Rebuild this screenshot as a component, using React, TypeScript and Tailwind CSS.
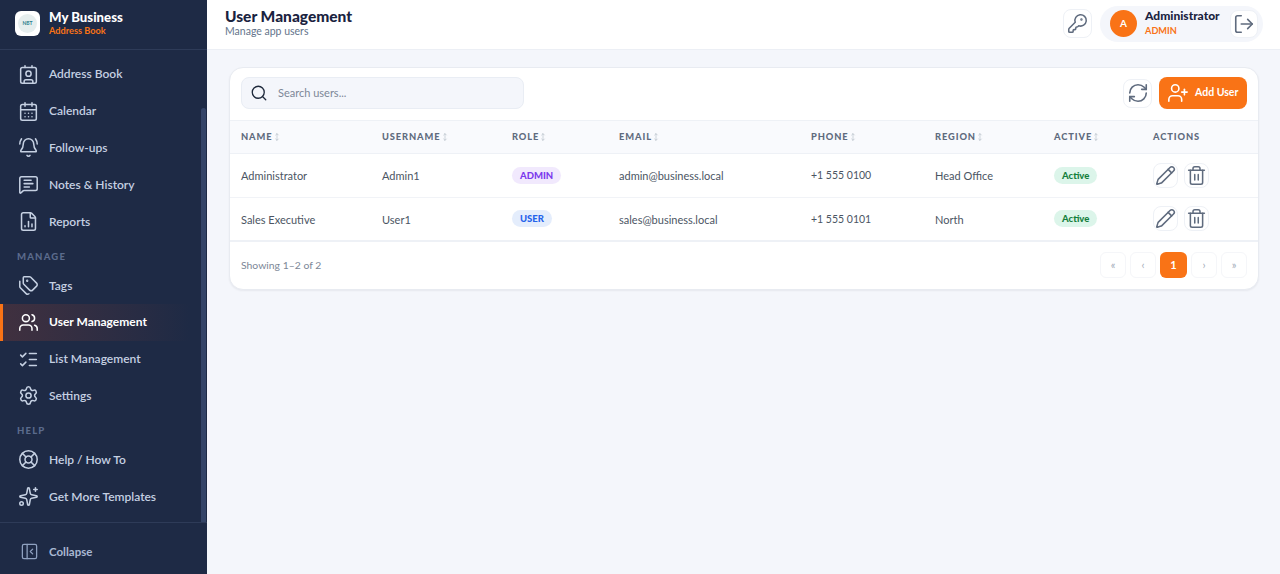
import React from 'react';
import {
  BellRing,
  CalendarDays,
  Contact,
  FileChartColumn,
  KeyRound,
  LifeBuoy,
  ListChecks,
  LogOut,
  MessageSquareText,
  MoveVertical,
  PanelLeftClose,
  Pencil,
  RefreshCw,
  Search,
  Settings,
  Sparkles,
  Tags,
  Trash2,
  UserPlus,
  Users,
} from 'lucide-react';

const mainNav = [
  { label: 'Address Book', icon: Contact },
  { label: 'Calendar', icon: CalendarDays },
  { label: 'Follow-ups', icon: BellRing },
  { label: 'Notes & History', icon: MessageSquareText },
  { label: 'Reports', icon: FileChartColumn },
];

const manageNav = [
  { label: 'Tags', icon: Tags },
  { label: 'User Management', icon: Users, active: true },
  { label: 'List Management', icon: ListChecks },
  { label: 'Settings', icon: Settings },
];

const helpNav = [
  { label: 'Help / How To', icon: LifeBuoy },
  { label: 'Get More Templates', icon: Sparkles },
];

const columns = ['Name', 'Username', 'Role', 'Email', 'Phone', 'Region', 'Active'];

const users = [
  {
    name: 'Administrator',
    username: 'Admin1',
    role: 'ADMIN',
    roleClass: 'bg-[#f1e9fd] text-[#7c3aed]',
    email: 'admin@business.local',
    phone: '+1 555 0100',
    region: 'Head Office',
  },
  {
    name: 'Sales Executive',
    username: 'User1',
    role: 'USER',
    roleClass: 'bg-[#e4edfc] text-[#2563eb]',
    email: 'sales@business.local',
    phone: '+1 555 0101',
    region: 'North',
  },
];

const NavItem = ({ label, icon: Icon, active }: { label: string; icon: React.ElementType; active?: boolean }) => (
  <div
    className={
      active
        ? 'flex h-[36.8px] w-[190px] items-center gap-[11px] border-l-[3px] border-[#f97316] bg-gradient-to-r from-[#40303f] to-[#1e2a45] pl-[16px] text-[12px] font-bold text-white'
        : 'flex h-[36.8px] items-center gap-[11px] pl-[19px] text-[12px] font-semibold text-[#c5d0e2]'
    }
  >
    <Icon size={18} strokeWidth={1.75} className="h-[19px] w-[19px] shrink-0 scale-[1.1]" />
    <span>{label}</span>
  </div>
);

const SectionLabel = ({ children }: { children: string }) => (
  <div className="flex h-[27.2px] items-end pb-[3px] pl-[17px] text-[9.5px] font-black tracking-[1.2px] text-[#5b6b8c]">
    {children}
  </div>
);

const IconBox = ({ children, className }: { children: React.ReactNode; className: string }) => (
  <div className={`flex items-center justify-center rounded-lg border border-[#eef1f6] bg-white text-[#5f6b7e] ${className}`}>
    {children}
  </div>
);

const PageButton = ({ label }: { label: string }) => (
  <div className="flex h-[26px] w-[26px] items-center justify-center rounded-md border border-[#f5f6f9] bg-white text-[11px] text-[#a3acb9]">
    {label}
  </div>
);

export default function App() {
  return (
    <div className="flex h-[574px] w-[1280px] overflow-hidden bg-[#f4f6fb] font-['Lato',sans-serif]">
      <aside className="relative flex w-[207px] shrink-0 flex-col bg-[#1e2a45]">
        <div className="flex h-[50px] shrink-0 items-center gap-[9px] border-b border-[#2e3b58] pb-[4px] pl-[15px]">
          <div className="mt-[2px] flex h-[25px] w-[25px] items-center justify-center rounded-md bg-white">
            <div className="flex h-[19px] w-[19px] items-center justify-center rounded-full bg-[#e6eeee] text-[5px] font-bold text-[#2a7f8f]">
              NBT
            </div>
          </div>
          <div>
            <div className="text-[13.2px] font-black leading-[15px] text-white">My Business</div>
            <div className="text-[9.2px] font-bold leading-[11px] text-[#f97316]">Address Book</div>
          </div>
        </div>

        <nav className="flex-1 pt-[6px]">
          {mainNav.map((item) => (
            <NavItem key={item.label} {...item} />
          ))}
          <SectionLabel>MANAGE</SectionLabel>
          {manageNav.map((item) => (
            <NavItem key={item.label} {...item} />
          ))}
          <SectionLabel>HELP</SectionLabel>
          {helpNav.map((item) => (
            <NavItem key={item.label} {...item} />
          ))}
        </nav>

        <div className="flex h-[52px] shrink-0 items-center gap-[10px] border-t border-[#2e3b58] pl-5 pt-[6px] text-[11.5px] font-bold text-[#a9b8d2]">
          <PanelLeftClose size={19} strokeWidth={1.6} className="shrink-0 text-[#8fa1c0]" />
          <span>Collapse</span>
        </div>

        {/* sidebar scrollbar thumb */}
        <div className="absolute right-[1px] top-[108px] h-[414px] w-[5px] rounded-t bg-[#344467]" />
      </aside>

      <div className="flex min-w-0 flex-1 flex-col">
        <header className="flex h-[50px] shrink-0 items-center justify-between border-b border-[#eceff5] bg-white pl-[18px] pr-[17px]">
          <div className="pb-[3px]">
            <div className="text-[15.5px] font-black leading-[17px] text-[#1a2340]">User Management</div>
            <div className="text-[10.5px] leading-[13px] text-[#64748b]">Manage app users</div>
          </div>
          <div className="flex items-center gap-[8px] pb-[2px]">
            <IconBox className="h-[29px] w-[29px]">
              <KeyRound size={21} strokeWidth={1.75} />
            </IconBox>
            <div className="flex h-[36px] w-[163px] items-center rounded-[18px] bg-[#f4f6fb] pl-[10px]">
              <div className="flex h-[27px] w-[27px] items-center justify-center rounded-full bg-[#f97316] text-[10px] font-bold text-white">
                A
              </div>
              <div className="ml-[8px] w-[85px]">
                <div className="text-[12px] font-black leading-[15px] text-[#1a2340]">Administrator</div>
                <div className="text-[9.2px] font-bold leading-[16px] text-[#f97316]">ADMIN</div>
              </div>
              <IconBox className="h-[28px] w-[28px]">
                <LogOut size={22} strokeWidth={1.75} />
              </IconBox>
            </div>
          </div>
        </header>

        <main className="pl-[22px] pt-[17px]">
          <div className="h-[223px] w-[1030px] rounded-[14px] border border-[#e8ebf1] bg-white shadow-[0_1px_2px_rgba(15,23,42,0.06)]">
            <div className="flex h-[53px] items-center justify-between border-b border-[#eef1f6] pb-[2px] pl-[11px] pr-[11px]">
              <div className="flex h-[32px] w-[283px] items-center gap-[10px] rounded-lg border border-[#e9edf4] bg-[#f4f6fb] pl-[8px] text-[11px] text-[#7c8797]">
                <Search size={18} strokeWidth={1.75} className="text-[#1e293b]" />
                <span>Search users...</span>
              </div>
              <div className="flex items-center gap-[7px]">
                <IconBox className="h-[29px] w-[29px]">
                  <RefreshCw size={22} strokeWidth={1.75} />
                </IconBox>
                <div className="flex h-[32px] w-[88px] items-center gap-[6px] rounded-lg bg-[#f97316] pl-[8px] text-[10.5px] font-bold text-white">
                  <UserPlus size={22} strokeWidth={1.75} />
                  <span>Add User</span>
                </div>
              </div>
            </div>

            <table className="w-full table-fixed border-collapse text-left">
              <colgroup>
                <col className="w-[141px]" />
                <col className="w-[130px]" />
                <col className="w-[107px]" />
                <col className="w-[192px]" />
                <col className="w-[124px]" />
                <col className="w-[119px]" />
                <col className="w-[99px]" />
                <col />
              </colgroup>
              <thead>
                <tr className="h-[32px] border-b border-[#eef1f6] bg-[#f9fafd] text-[9.3px] tracking-[0.9px] text-[#5f6b7e]">
                  {columns.map((col) => (
                    <th key={col} className="pl-[11px] font-black">
                      <span className="inline-flex items-center">
                        {col.toUpperCase()}
                        <MoveVertical size={8} strokeWidth={1.5} className="text-[#a3acb9]" />
                      </span>
                    </th>
                  ))}
                  <th className="pl-[11px] font-black">ACTIONS</th>
                </tr>
              </thead>
              <tbody className="text-[11px] text-[#4b5563]">
                {users.map((user, i) => (
                  <tr key={user.username} className={i === 0 ? 'h-[44px] border-b border-[#f1f3f7]' : 'h-[44px] border-b-2 border-[#eef1f6]'}>
                    <td className="pl-[11px] pt-[2px]">{user.name}</td>
                    <td className="pl-[11px] pt-[2px]">{user.username}</td>
                    <td className="pl-[11px]">
                      <span className={`inline-block rounded-full px-[8px] text-[9.5px] font-black leading-[17px] ${user.roleClass}`}>
                        {user.role}
                      </span>
                    </td>
                    <td className="pl-[11px] pt-[2px]">{user.email}</td>
                    <td className="pl-[11px] pt-[2px] text-[10.5px]">{user.phone}</td>
                    <td className="pl-[11px] pt-[2px]">{user.region}</td>
                    <td className="pl-[11px]">
                      <span className="inline-block rounded-full bg-[#dcf5ea] px-[8px] text-[9.5px] font-black leading-[17px] text-[#15803d]">
                        Active
                      </span>
                    </td>
                    <td className="pl-[11px]">
                      <div className="flex items-center gap-[6px]">
                        <IconBox className="h-[25px] w-[25px]">
                          <Pencil size={21} strokeWidth={1.75} />
                        </IconBox>
                        <IconBox className="h-[25px] w-[25px]">
                          <Trash2 size={21} strokeWidth={1.75} />
                        </IconBox>
                      </div>
                    </td>
                  </tr>
                ))}
              </tbody>
            </table>

            <div className="flex h-[48px] items-center justify-between pl-[11px] pr-[11px] text-[10.4px] text-[#7c8797]">
              <span>Showing 1–2 of 2</span>
              <div className="mb-[2px] flex items-center gap-[4px]">
                <PageButton label="«" />
                <PageButton label="‹" />
                <div className="flex h-[26px] w-[27px] items-center justify-center rounded-md bg-[#f97316] text-[11px] font-bold text-white">
                  1
                </div>
                <PageButton label="›" />
                <PageButton label="»" />
              </div>
            </div>
          </div>
        </main>
      </div>
    </div>
  );
}
